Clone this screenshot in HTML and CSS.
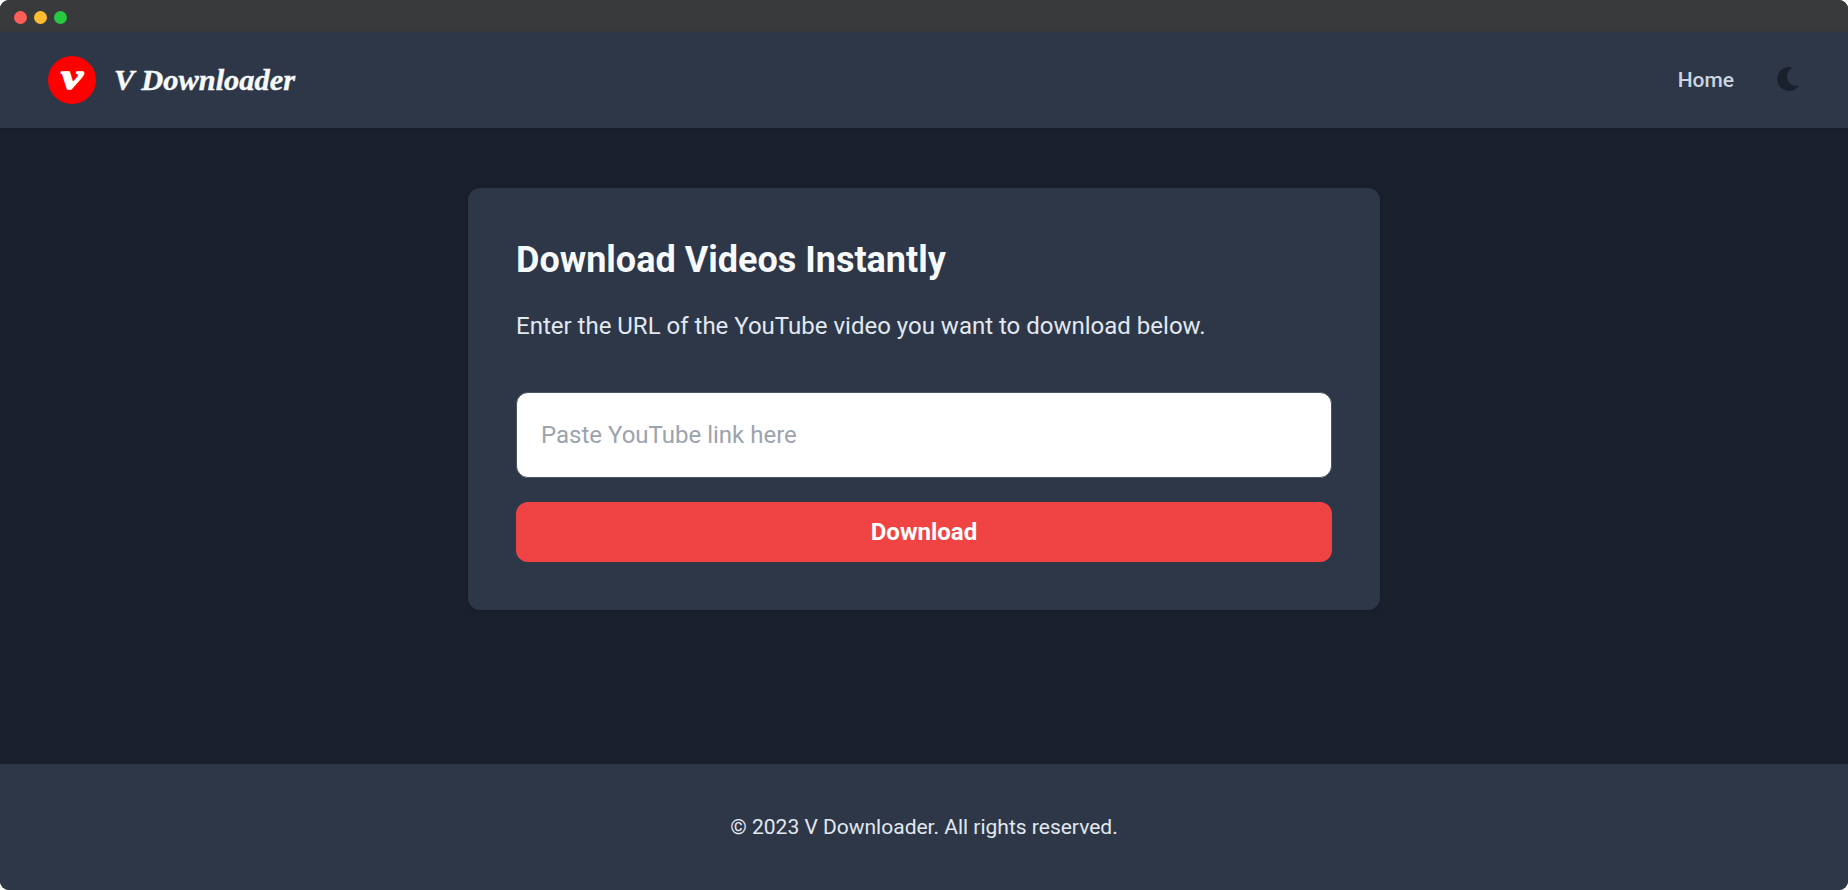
FILE: index.html
```html
<!DOCTYPE html>
<html lang="en">
<head>
<meta charset="utf-8">
<title>V Downloader</title>
<link rel="stylesheet" href="styles.css">
</head>
<body>
<div class="window">
  <div class="titlebar">
    <span class="dot dot-close"></span>
    <span class="dot dot-min"></span>
    <span class="dot dot-max"></span>
  </div>
  <header class="header">
    <a class="brand">
      <span class="brand-mark"><svg class="mark-svg" viewBox="0 0 48 48" width="48" height="48"><text class="mark-text" x="13" y="33" textLength="22" lengthAdjust="spacingAndGlyphs">v</text></svg></span>
      <svg class="brand-name" viewBox="0 0 184 48" width="184" height="48"><text class="name-text" x="0" y="33.5" textLength="181" lengthAdjust="spacingAndGlyphs">V Downloader</text></svg>
    </a>
    <nav class="nav">
      <a class="nav-link">Home</a>
      <button class="theme-toggle" aria-label="Toggle theme">
        <svg viewBox="0 0 512 512" width="24" height="24" fill="currentColor"><path d="M283.211 512c78.962 0 151.079-35.925 198.857-94.792 7.068-8.708-.639-21.43-11.562-19.35-124.203 23.654-238.262-71.576-238.262-196.954 0-72.222 38.662-138.635 101.498-174.394 9.686-5.512 7.25-20.197-3.756-22.23A258.156 258.156 0 0 0 283.211 0c-141.309 0-256 114.511-256 256 0 141.309 114.511 256 256 256z"/></svg>
      </button>
    </nav>
  </header>
  <main class="main">
    <section class="card">
      <h1 class="card-title">Download Videos Instantly</h1>
      <p class="card-text">Enter the URL of the YouTube video you want to download below.</p>
      <form class="form">
        <input class="input" type="text" placeholder="Paste YouTube link here">
        <button class="button" type="button">Download</button>
      </form>
    </section>
  </main>
  <footer class="footer">© 2023 V Downloader. All rights reserved.</footer>
</div>
</body>
</html>
```
FILE: styles.css
```css
* { box-sizing: border-box; margin: 0; padding: 0; }
body { background: #fff; font-family: Roboto, sans-serif; }
.window {
  display: flex;
  flex-direction: column;
  height: 890px;
  border-radius: 9px;
  overflow: hidden;
  background: #1a202c;
}
.titlebar {
  display: flex;
  align-items: center;
  gap: 7px;
  height: 32px;
  padding: 2px 13.5px 0;
  background: #383a3b;
}
.dot { width: 13px; height: 13px; border-radius: 50%; }
.dot-close { background: #ff5f57; }
.dot-min { background: #febc2e; }
.dot-max { background: #28c840; }
.header {
  display: flex;
  align-items: center;
  justify-content: space-between;
  height: 96px;
  padding: 0 48px;
  background: #2d3748;
  box-shadow: 0 1px 4px rgba(0, 0, 0, 0.12);
}
.brand { display: flex; align-items: center; gap: 18px; }
.brand-mark { width: 48px; height: 48px; border-radius: 50%; background: #f00; }
.mark-svg { display: block; overflow: visible; }
.mark-text { font: italic 700 36px "Liberation Serif", serif; fill: #fff; stroke: #fff; stroke-width: 1.4; }
.name-text { font: italic 700 29px "Liberation Serif", serif; fill: #f7fafc; stroke: #f7fafc; stroke-width: 0.4; }
.nav { display: flex; align-items: center; gap: 42px; }
.nav-link { font-size: 21px; line-height: 30px; font-weight: 500; color: #cbd5e0; }
.theme-toggle {
  display: flex;
  padding-bottom: 2px;
  border: 0;
  background: none;
  color: #1a202c;
}
.main { flex: 1; padding-top: 60px; }
.card {
  width: 912px;
  margin: 0 auto;
  padding: 48px;
  border-radius: 12px;
  background: #2d3748;
  box-shadow: 0 1px 4px rgba(0, 0, 0, 0.12);
}
.card-title { font-size: 36px; line-height: 48px; font-weight: 700; color: #f7fafc; }
.card-text { margin-top: 24px; font-size: 24px; line-height: 36px; color: #e2e8f0; }
.form { display: flex; flex-direction: column; gap: 24px; margin-top: 48px; }
.input {
  height: 86px;
  padding: 24px;
  border: 1px solid #4a5568;
  border-radius: 12px;
  background: #fff;
  font: 24px/36px Roboto, sans-serif;
}
.input::placeholder { color: #9ca3af; opacity: 1; }
.button {
  height: 60px;
  border: 0;
  border-radius: 12px;
  background: #f04444;
  color: #fff;
  font: 700 24px/36px Roboto, sans-serif;
}
.footer {
  padding: 48px;
  background: #2d3748;
  color: #e2e8f0;
  font-size: 21px;
  line-height: 30px;
  text-align: center;
}
```
